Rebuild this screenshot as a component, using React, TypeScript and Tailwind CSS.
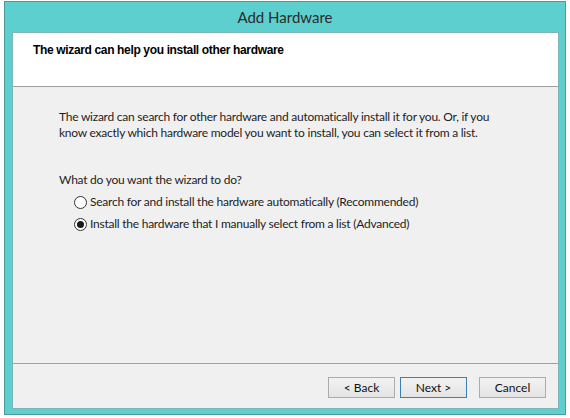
import React from "react";

const segoe = { fontFamily: 'Lato, "Noto Sans", sans-serif' };

function Radio({ checked }: { checked: boolean }) {
  return (
    <span className="w-[13px] h-[13px] rounded-full border border-[#333] bg-white flex items-center justify-center shrink-0">
      {checked && <span className="w-[7px] h-[7px] rounded-full bg-[#1a1a1a]" />}
    </span>
  );
}

function Btn({ label, primary }: { label: string; primary?: boolean }) {
  return (
    <div
      className={`w-[67px] h-[21px] flex items-center justify-center text-[12px] text-[#111] bg-gradient-to-b from-[#f2f2f2] to-[#e4e4e4] border ${
        primary ? "border-[#3c7fb1]" : "border-[#acacac]"
      }`}
      style={segoe}
    >
      {label}
    </div>
  );
}

export default function App() {
  return (
    <div className="w-[570px] h-[418px] bg-white pt-[1px] pl-[4px]">
      <div className="w-[562px] h-[414px] border border-[#4d9a9b] bg-[#5dcfcf] flex flex-col">
        <div className="h-[30px] flex items-center justify-center text-[15px] text-[#2b2b2b]" style={segoe}>
          Add Hardware
        </div>
        <div className="ml-[7px] mr-[6px] mb-[5px] flex-1 flex flex-col border border-[#7fb5b6] bg-[#f0f0f0]">
          <div className="h-[54px] bg-white border-b border-[#a0a0a0] pl-[20px] pt-[8px]">
            <div
              className="text-[12px] font-bold text-black tracking-[-0.35px]"
              style={{ fontFamily: '"Liberation Sans", Arial, sans-serif' }}
            >
              The wizard can help you install other hardware
            </div>
          </div>
          <div
            className="flex-1 flex flex-col pl-[46px] pt-[22px] text-[12px] text-[#1e1e1e] tracking-[-0.24px]"
            style={segoe}
          >
            <div className="leading-[16px]">
              The wizard can search for other hardware and automatically install it for you. Or, if you
              <br />
              know exactly which hardware model you want to install, you can select it from a list.
            </div>
            <div className="mt-[31px] leading-[16px]">What do you want the wizard to do?</div>
            <div className="mt-[5px] ml-[15px] flex items-center gap-[3px] h-[18px]">
              <Radio checked={false} />
              <span>Search for and install the hardware automatically (Recommended)</span>
            </div>
            <div className="mt-[4px] ml-[15px] flex items-center gap-[3px] h-[18px]">
              <Radio checked={true} />
              <span>Install the hardware that I manually select from a list (Advanced)</span>
            </div>
          </div>
          <div className="h-[45px] border-t border-[#a0a0a0] flex items-start justify-end pt-[13px] pr-[12px]">
            <Btn label="< Back" />
            <div className="w-[5px]" />
            <Btn label="Next >" primary />
            <div className="w-[12px]" />
            <Btn label="Cancel" />
          </div>
        </div>
      </div>
    </div>
  );
}
